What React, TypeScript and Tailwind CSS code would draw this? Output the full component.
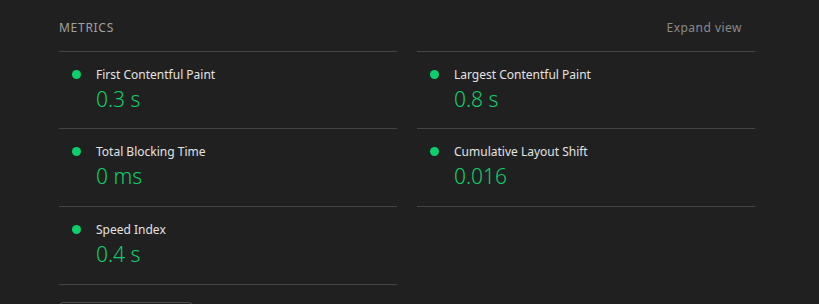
import React from "react";

const metrics = [
  { label: "First Contentful Paint", value: "0.3 s" },
  { label: "Largest Contentful Paint", value: "0.8 s" },
  { label: "Total Blocking Time", value: "0 ms" },
  { label: "Cumulative Layout Shift", value: "0.016" },
  { label: "Speed Index", value: "0.4 s" },
];

export default function App() {
  return (
    <div
      className="w-[819px] h-[304px] overflow-hidden bg-[#202020]"
      style={{ fontFamily: '"Noto Sans", "Open Sans", sans-serif' }}
    >
      <div className="ml-[59px] w-[696px]">
        <div className="flex items-center justify-between h-[51px] pt-[5px]">
          <span className="text-[12px] tracking-[0.06em] text-[#a0a0a0]">METRICS</span>
          <span className="text-[12px] tracking-[0.04em] text-[#8a8a8a] mr-[13px]">Expand view</span>
        </div>
        <div className="grid grid-cols-2 gap-x-[20px] items-start">
          {metrics.map((m, i) => (
            <div
              key={m.label}
              className={`h-[78px] border-b border-[#444444] flex pl-[13px] pt-[13px] ${i < 2 ? "border-t" : ""}`}
            >
              <div className="w-[9px] h-[9px] rounded-full bg-[#0cce6b] mt-[5px]" />
              <div className="ml-[15px] flex flex-col">
                <span className="text-[12px] leading-[20px] text-[#e3e3e3]">{m.label}</span>
                <span className="text-[21px] leading-[28px] text-[#0cce6b] font-light">{m.value}</span>
              </div>
            </div>
          ))}
        </div>
        <div className="mt-[17px] w-[134px] h-[30px] rounded-[4px] border border-[#4a4a4a]" />
      </div>
    </div>
  );
}
